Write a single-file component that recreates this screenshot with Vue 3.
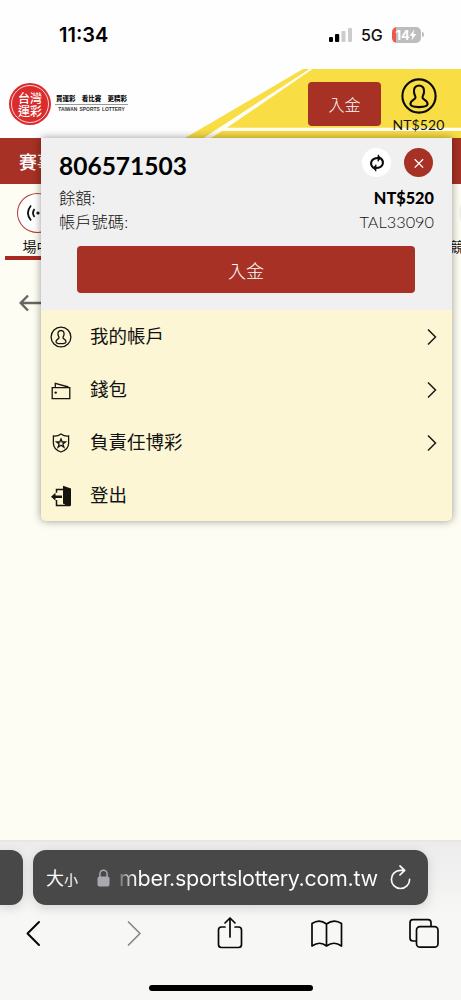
<script setup>
const menu = [
  { icon: 'user', label: '我的帳戶', arrow: true },
  { icon: 'wallet', label: '錢包', arrow: true },
  { icon: 'shield', label: '負責任博彩', arrow: true },
  { icon: 'exit', label: '登出', arrow: false }
]
</script>

<template>
  <div class="phone">
    <div class="status">
      <span class="time">11:34</span>
      <div class="status-right">
        <svg class="signal" width="24" height="16" viewBox="0 0 24 16">
          <rect x="0" y="10" width="4" height="5" rx="1" />
          <rect x="6" y="7" width="4.2" height="8" rx="1" />
          <rect x="12.5" y="4" width="4" height="11" rx="1" fill="#ccc" />
          <rect x="19" y="1" width="4" height="14" rx="1" fill="#ccc" />
        </svg>
        <span class="net">5G</span>
        <div class="battery">
          <span>14</span>
          <svg width="8" height="12" viewBox="0 0 8 12"><path d="M5.4 0.6L0.6 6.8h2.8L2.4 11.4 7.4 5H4.5z" fill="#fff" /></svg>
        </div>
        <i class="cap"></i>
      </div>
    </div>

    <header class="header">
      <svg class="stripes" width="461" height="69" viewBox="0 0 461 69">
        <path d="M303 0H461V69H185z" fill="#f8dd45" />
        <path d="M309.500 0H312.500L227 58.700H461V62H222L211 69H203.500L221 57.500z" fill="#fffef4" />
      </svg>
      <div class="brand">
        <div class="seal"><div class="seal-in">台灣<br />運彩</div></div>
        <div class="brand-text">
          <div class="slogan"><span>買運彩</span><span>看比賽</span><span>更精彩</span></div>
          <div class="en">TAIWAN SPORTS LOTTERY</div>
        </div>
      </div>
      <button class="head-deposit">入金</button>
      <div class="account">
        <svg width="36" height="36" viewBox="0 0 36 36" fill="none" stroke="#0b0b05" stroke-width="2.1">
          <circle cx="18" cy="18" r="16.6" />
          <path d="M18 7.5C13.8 7.5 12.6 10.8 13 14.2C13.3 17 14.5 17.8 14.5 19.6C14.5 21.6 9.4 22 9.4 26.1C9.4 28.6 13.2 29.1 18 29.1S26.6 28.6 26.6 26.1C26.6 22 21.5 21.6 21.5 19.6C21.5 17.8 22.7 17 23 14.2C23.4 10.8 22.2 7.5 18 7.5z" />
        </svg>
        <span>NT$520</span>
      </div>
    </header>

    <nav class="nav">賽事</nav>

    <main class="content">
      <div class="sports">
        <div class="live">
          <div class="live-ring">
            <svg width="24" height="18" viewBox="0 0 24 18" fill="none" stroke="#111" stroke-width="1.8">
              <circle cx="12" cy="9" r="1.6" fill="#111" stroke="none" />
              <path d="M8.5 5Q5.500 9 8.5 13M5 1.5Q-1.2 9 5 16.5M15.5 5Q18.5 9 15.5 13M19 1.5Q25.2 9 19 16.5" />
            </svg>
          </div>
          <span>場中</span>
        </div>
        <div class="next"><div class="next-ring"></div><span>競</span></div>
      </div>
      <svg class="back" width="30" height="18" viewBox="0 0 30 18" fill="none" stroke="#666" stroke-width="2.4"><path d="M10 1.5L2.7 9 10 16.5M3 9h27" /></svg>
    </main>

    <footer class="browser">
      <div class="tabs">
        <div class="tab-prev"></div>
        <div class="address">
          <span class="aa">大<small>小</small></span>
          <svg class="lock" width="14" height="18" viewBox="0 0 14 18"><rect x="0.5" y="7.5" width="12" height="10" rx="2" fill="#aaa8b0" /><path d="M2.9 8V4.8a3.6 3.6 0 0 1 7.2 0V8" fill="none" stroke="#aaa8b0" stroke-width="1.5" /></svg>
          <span class="url">mber.sportslottery.com.tw</span>
          <svg class="reload" width="22" height="26" viewBox="0 0 22 26" fill="none" stroke="#f7f7f7" stroke-width="1.7" stroke-linecap="round" stroke-linejoin="round"><path d="M14 5.300H10.500A9.100 9.100 0 1 0 19.600 14.400M10 1l4.700 4.300-4.700 4.500" /></svg>
        </div>
      </div>
      <svg class="tools" width="461" height="40" viewBox="0 0 461 40" fill="none" stroke="#080808" stroke-width="1.7" stroke-linecap="round" stroke-linejoin="round">
        <path d="M39 7L27.500 18.500 39 30" stroke-width="2" />
        <path d="M128.500 7L140 18.500 128.500 30" stroke="#888" />
        <path d="M225 12h-3.500q-3 0-3 3V29.500q0 3 3 3h17q3 0 3-3V15q0-3-3-3H235M230 22V3M225 8l5-5 5 5" />
        <path d="M326.500 9Q319.500 3.500 312 8.500V31Q320 25.500 326.500 31Q334 25.500 341.500 31V8.500Q334 3.500 326.500 9zM326.500 9V31" />
        <path d="M416 26h-3q-3 0-3-3V8q0-3.300 3-3.300h15q3 0 3 3v3.500" />
        <rect x="416.500" y="11.700" width="21.500" height="20.500" rx="3.500" />
      </svg>
      <div class="home"></div>
    </footer>

    <section class="panel">
      <div class="summary">
        <div class="row top">
          <strong class="uid">806571503</strong>
          <div class="actions">
            <button class="round refresh">
              <svg width="16" height="18" viewBox="0 0 16 18" fill="none" stroke="#0a0a0a" stroke-width="2"><path d="M4.300 13.600Q1.500 11.600 2.200 8.300Q3.200 4 9.500 4M11.700 4.400Q14.500 6.400 13.800 9.700Q12.800 14 6.500 14" /><path d="M9.300 .7v3.700l-.2 3M6.700 17.300v-3.700l.2-3" stroke-width="1.300" /><path d="M9.300 1l3.300 3-3.300 3zM6.700 17l-3.300-3 3.300-3z" fill="#0a0a0a" stroke="none" /></svg>
            </button>
            <button class="round close">
              <svg width="12" height="12" viewBox="0 0 12 12" stroke="#fff" stroke-width="1.300"><path d="M1.700 2.200l8.400 8.400M10.100 2.200l-8.400 8.400" /></svg>
            </button>
          </div>
        </div>
        <div class="row balance"><span>餘額:</span><b>NT$520</b></div>
        <div class="row number"><span>帳戶號碼:</span><span class="light">TAL33090</span></div>
        <button class="deposit">入金</button>
      </div>
      <ul class="menu">
        <li v-for="m in menu" :key="m.label">
          <svg class="icon" width="24" height="24" viewBox="0 0 24 24" fill="none" stroke="#15140f" stroke-width="1.300">
            <g v-if="m.icon === 'user'"><circle cx="12" cy="12" r="9.900" /><path d="M12 5.500C9.300 5.500 8.700 7.600 9 9.600C9.200 11.200 10 11.600 10 12.700C10 14.100 7 14.300 7 16.700C7 18.200 9.200 18.600 12 18.600S17 18.200 17 16.700C17 14.300 14 14.100 14 12.700C14 11.600 14.800 11.200 15 9.600C15.300 7.600 14.700 5.500 12 5.500z" /></g>
            <g v-else-if="m.icon === 'wallet'"><path d="M3.200 9.700H20.800V20.700H3.200zM6.300 9.500V5.400L19.500 9" /><circle cx="6.700" cy="14.600" r="1.200" fill="#15140f" stroke="none" /></g>
            <g v-else-if="m.icon === 'shield'"><path d="M12 3Q8.500 5.500 4.400 5V12.500Q4.500 18.500 12 21Q19.500 18.500 19.600 12.500V5Q15.500 5.500 12 3z" /><path d="M12 8l1.200 3h3.200l-2.500 2 1 3.200-2.900-1.900-2.900 1.900 1-3.200-2.500-2h3.200z" /></g>
            <g v-else><path d="M7.500 8.700V5.500H14M7.500 16V21.500H21" stroke-width="1.500" /><path d="M14 1.700l8 2.800v17.200H18L14 19.500z" fill="#15140f" stroke="none" /><path d="M2 12.700l4.500-4v2.800H13v2.500H6.500v2.800z" fill="#15140f" stroke="none" /></g>
          </svg>
          <span>{{ m.label }}</span>
          <svg v-if="m.arrow" class="chev" width="10" height="18" viewBox="0 0 10 18" fill="none" stroke="#1a1a16" stroke-width="1.500"><path d="M1 1.500L8.500 9 1 16.500" /></svg>
        </li>
      </ul>
    </section>
  </div>
</template>

<style>
body { margin: 0; }
</style>

<style scoped>
* { box-sizing: border-box; }
button { border: 0; padding: 0; font: inherit; }
svg { display: block; flex: none; }
.phone { position: relative; width: 461px; height: 1000px; overflow: hidden; display: flex; flex-direction: column; background: #fefefe; color: #111; font-family: Lato, "Noto Sans CJK TC", sans-serif; }
.status { height: 69px; flex: none; display: flex; justify-content: space-between; padding: 22px 37px 0 59px; font-family: Inter, "Liberation Sans", sans-serif; }
.time { font-size: 20px; line-height: 26px; font-weight: 600; letter-spacing: 0; color: #000; }
.status-right { display: flex; height: 25px; align-items: center; }
.signal { margin-right: 8px; }
.net { font-size: 16px; font-weight: 500; width: 31px; letter-spacing: -.1px; }
.battery { width: 29px; height: 16px; border-radius: 5px; background: linear-gradient(90deg, #f2564a 4px, #bdbdbd 4px); display: flex; align-items: center; justify-content: center; color: #fff; font-size: 13px; font-weight: 700; letter-spacing: -.3px; }
.cap { width: 2px; height: 5px; border-radius: 0 2px 2px 0; margin-left: 1px; background: #bdbdbd; }
.header { position: relative; height: 69px; flex: none; display: flex; align-items: flex-start; padding: 0 16px 0 9px; }
.stripes { position: absolute; left: 0; top: 0; }
.brand { position: relative; display: flex; padding-top: 14px; width: 299px; }
.seal { width: 42px; height: 42px; flex: none; padding: 2px; border-radius: 50%; background: #da2c2c; }
.seal-in { width: 38px; height: 38px; border: 1px solid #ffd5d0; border-radius: 50%; color: #fff; padding-top: 5px; text-align: center; font: 500 12px/13px "Noto Sans CJK TC", sans-serif; }
.brand-text { margin: 11px 0 0 4px; width: 73px; }
.slogan { display: flex; justify-content: space-between; padding: 0 1px; border-bottom: 1px solid #999; height: 11px; font: 900 6.500px/9px "Noto Sans CJK TC", sans-serif; }
.en { margin-top: 1px; text-align: center; font: 700 4.900px/8px "Liberation Sans", sans-serif; word-spacing: 1px; color: #333; white-space: nowrap; }
.head-deposit { position: relative; width: 73px; height: 44px; margin-top: 13px; border-radius: 4px; background: #a63124; color: #fff; font: 300 16px/44px "Noto Sans CJK TC", sans-serif; }
.account { position: relative; width: 53px; margin-left: 11px; padding-top: 9px; display: flex; flex-direction: column; align-items: center; font-size: 14px; line-height: 17px; white-space: nowrap; }
.account span { margin-top: 2px; letter-spacing: .1px; }
.nav { height: 46px; flex: none; padding-left: 19px; background: #a63124; color: #fff; font: 500 18px/46px "Noto Sans CJK TC", sans-serif; }
.content { flex: 1; background: #fefdf3; }
.sports { display: flex; justify-content: space-between; height: 76px; }
.live { width: 70px; margin-left: 5px; padding-top: 9px; border-bottom: 4px solid #a62a21; display: flex; flex-direction: column; align-items: center; font: 400 14px/20px "Noto Sans CJK TC", sans-serif; }
.live-ring { width: 41px; height: 41px; border: 1.500px solid #b73a34; border-radius: 50%; background: #fff; display: flex; align-items: center; justify-content: center; margin-left: -5px; }
.live span { margin-top: 3px; margin-left: -7px; }
.next { width: 12px; padding-top: 9px; overflow: hidden; white-space: nowrap; font: 400 14px/20px "Noto Sans CJK TC", sans-serif; }
.next-ring { width: 40px; height: 40px; margin: 0 0 3px 10px; border-radius: 50%; background: #eeeeea; }
.next span { margin-left: 1px; }
.back { margin: 34px 0 0 18px; }
.browser { height: 160px; flex: none; background: linear-gradient(#ececed, #f7f7f5 75px); border-top: 2px solid #e8e8e2; }
.tabs { display: flex; gap: 10px; padding-top: 8px; }
.tab-prev { width: 23px; height: 55px; border-radius: 0 12px 12px 0; background: #484848; box-shadow: 0 3px 12px #0002; }
.address { width: 395px; height: 55px; border-radius: 13px; background: #484848; box-shadow: 0 3px 12px #0002; color: #fff; display: flex; align-items: center; padding-left: 13px; }
.aa { width: 51px; font: 400 18px/24px "Noto Sans CJK TC", sans-serif; white-space: nowrap; }
.aa small { font-size: 14px; }
.url { width: 260px; margin: 0 11px 0 8px; font: 400 21.500px/28px Inter, "Liberation Sans", sans-serif; letter-spacing: -.3px; white-space: nowrap; background: linear-gradient(90deg, #777, #fff 18px); background-clip: text; color: transparent; }
.tools { margin-top: 10px; }
.home { width: 164px; height: 6px; margin: 30px 0 0 149px; border-radius: 3px; background: #000; }
.panel { position: absolute; left: 41px; top: 138px; width: 411px; height: 383px; border-radius: 0 0 5px 5px; background: #fcf6d5; box-shadow: 0 0 8px #0006; }
.summary { height: 172px; padding: 10px 18px 0; background: #f0f0f0; }
.row { display: flex; justify-content: space-between; align-items: center; }
.top { height: 32px; align-items: flex-start; }
.uid { font-size: 24.500px; line-height: 35px; font-weight: 700; color: #000; }
.actions { display: flex; gap: 13px; margin-right: 1px; }
.round { width: 29px; height: 29px; border-radius: 50%; display: grid; place-items: center; }
.refresh { background: #fff; }
.close { background: #a63124; }
.balance, .number { height: 24px; font-size: 16.300px; line-height: 24px; font-weight: 300; }
.balance { margin-top: 6px; }
.balance b { font-weight: 900; color: #000; }
.number .light { font-weight: 300; }
.deposit { display: block; width: 338px; height: 47px; margin: 12px 0 0 18px; border-radius: 4px; background: #a63124; color: #fff; font: 300 18px/46px "Noto Sans CJK TC", sans-serif; }
.menu { list-style: none; margin: 0; padding: 0; }
.menu li { height: 53px; display: flex; align-items: center; padding: 0 15px 0 8px; font: 400 18.500px/28px "Noto Sans CJK TC", sans-serif; }
.menu span { margin: -3px 0 0 17px; flex: 1; }
</style>
